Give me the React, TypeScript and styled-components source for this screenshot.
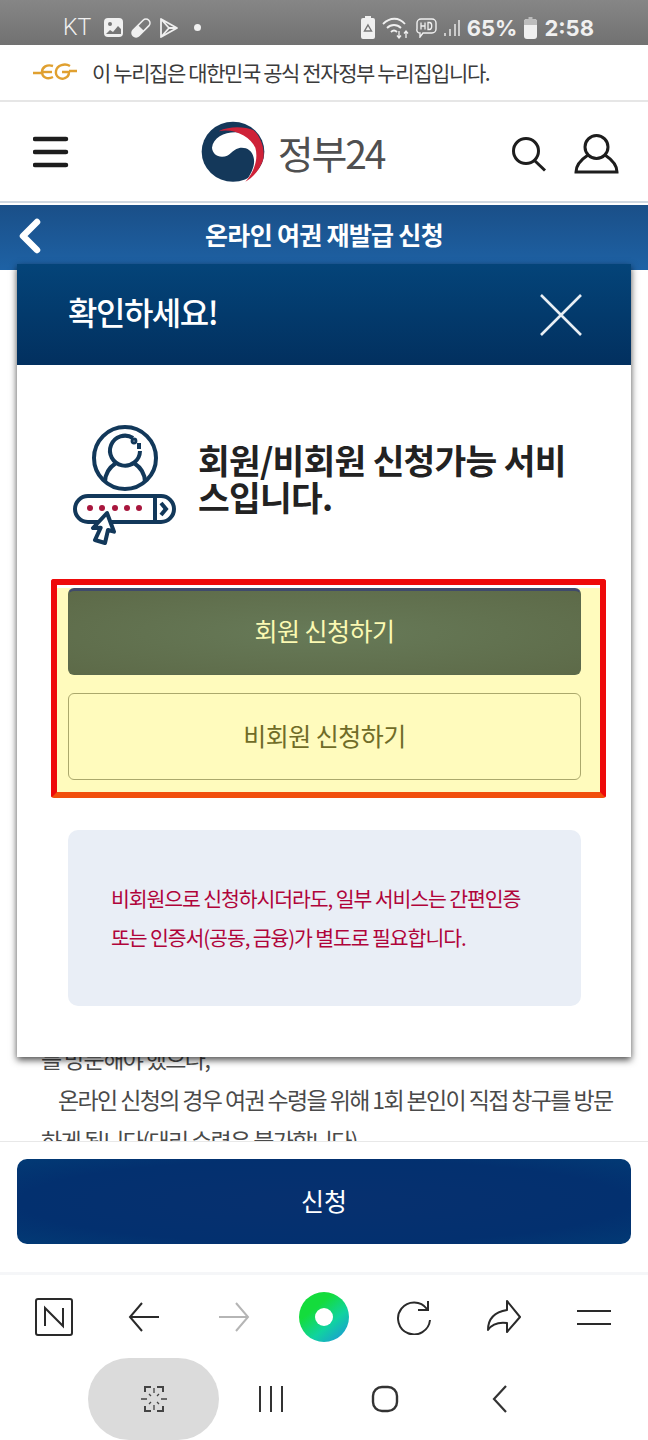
import React, { FC } from 'react'
import styled, { createGlobalStyle } from 'styled-components'

const GlobalStyle = createGlobalStyle`
  html, body {
    margin: 0;
    padding: 0;
    background: #fff;
  }
  * {
    box-sizing: border-box;
  }
  body {
    font-family: "Noto Sans CJK KR", "Noto Sans", sans-serif;
  }
`

const Page = styled.div`
  position: relative;
  width: 648px;
  height: 1440px;
  overflow: hidden;
  display: flex;
  flex-direction: column;
  background: #fff;
`

const StatusBar = styled.div`
  flex: 0 0 45px;
  display: flex;
  align-items: center;
  justify-content: space-between;
  padding: 10px 54px 0 63px;
  background: linear-gradient(#868686, #717171);
  color: #f0f0f0;
`

const StatusGroup = styled.div`
  display: flex;
  align-items: center;
  gap: 7px;
`

const Carrier = styled.span`
  font: 300 23px Roboto, sans-serif;
  margin-right: 6px;
`

const StatusStrong = styled.span`
  font: 700 22px Inter, Roboto, sans-serif;
`

const Banner = styled.div`
  flex: 0 0 57px;
  display: flex;
  align-items: center;
  gap: 15px;
  padding: 0 0 1px 33px;
  border-bottom: 2px solid #e6e6e6;
`

const BannerText = styled.span`
  font-size: 21px;
  letter-spacing: -1.4px;
  color: #3b3b3b;
`

const Header = styled.header`
  flex: 0 0 101px;
  display: flex;
  align-items: center;
  justify-content: space-between;
  padding: 0 29px 0 33px;
  border-bottom: 2px solid #cfd8e2;
`

const Logo = styled.div`
  display: flex;
  align-items: center;
  gap: 12px;
  margin-left: 5px;
`

const LogoText = styled.span`
  font: 400 39px "Noto Sans CJK KR", sans-serif;
  letter-spacing: -2.2px;
  color: #4f4f50;
`

const HeaderActions = styled.div`
  display: flex;
  align-items: center;
  gap: 27px;
  margin-top: 5px;
`

const TitleBar = styled.div`
  flex: 0 0 65px;
  margin-top: 2px;
  display: flex;
  align-items: center;
  justify-content: center;
  padding-bottom: 8px;
  position: relative;
  background: linear-gradient(#1a4f88, #1e62a5);
`

const TitleText = styled.h1`
  margin: 0;
  font-size: 25px;
  font-weight: 700;
  letter-spacing: -0.7px;
  color: #fff;
`

const BackButton = styled.span`
  position: absolute;
  left: 18px;
  top: 13px;
  display: flex;
`

const Content = styled.main`
  flex: 1;
  min-height: 0;
  overflow: hidden;
  display: flex;
  flex-direction: column;
  justify-content: flex-end;
  padding: 0 35px 0 41px;
  color: #4a4a4a;
  font-size: 23px;
  letter-spacing: -1.62px;
  line-height: 41px;
`

const ContentLine = styled.p<{ $indent?: boolean }>`
  margin: 0;
  white-space: nowrap;
  padding-left: ${(props) => (props.$indent ? '17px' : '0')};

  &:last-child {
    margin-bottom: -20px;
  }
`

const Footer = styled.div`
  flex: 0 0 134px;
  padding: 17px 17px 0;
  border-top: 1px solid #e8e8e8;
  border-bottom: 3px solid #f5f6f8;
`

const SubmitButton = styled.button`
  display: block;
  width: 100%;
  height: 85px;
  padding: 0 0 4px;
  border: 0;
  border-radius: 10px;
  background: radial-gradient(ellipse at center, #07306f 0%, #03306f 70%, #023a75 100%);
  color: #fff;
  font: 400 25px "Noto Sans CJK KR", sans-serif;
`

const BrowserBar = styled.nav`
  flex: 0 0 83px;
  display: grid;
  grid-template-columns: repeat(7, 90px);
  padding: 0 9px;
  place-items: center;
`

const NavBar = styled.div`
  flex: 0 0 82px;
  display: grid;
  grid-template-columns: 131px 104px 123px 108px;
  padding-left: 88px;
  place-items: center;
`

const CapturePill = styled.div`
  width: 131px;
  height: 82px;
  border-radius: 41px;
  background: #dbdbdb;
  display: flex;
  align-items: center;
  justify-content: center;
`

const Modal = styled.section`
  position: absolute;
  left: 17px;
  top: 264px;
  width: 614px;
  height: 793px;
  background: #fff;
  box-shadow: 0 3px 7px rgba(0, 0, 0, 0.7);
`

const ModalHead = styled.div`
  height: 101px;
  display: flex;
  align-items: center;
  justify-content: space-between;
  padding: 0 49px 0 51px;
  background: linear-gradient(#044479, #02305f);
`

const ModalTitle = styled.h2`
  margin: 0 0 8px;
  font-size: 32px;
  font-weight: 500;
  letter-spacing: -1.5px;
  color: #fff;
`

const Intro = styled.div`
  height: 214px;
  display: flex;
  align-items: center;
  gap: 21px;
  padding: 26px 53px 0 56px;

  svg {
    flex: none;
  }
`

const IntroText = styled.p`
  margin: -14px 0 0;
  font-size: 34.5px;
  font-weight: 700;
  line-height: 37px;
  letter-spacing: -0.75px;
  color: #222;
  word-break: break-all;
`

const Highlight = styled.div`
  margin: 0 25px 0 34px;
  height: 219px;
  padding: 3px 19px 0 11px;
  border: 6px solid #ee0a0a;
  border-bottom-color: #f14f0c;
  border-radius: 3px;
  background: linear-gradient(#fff 3px, #fffbbd 3px);
  display: flex;
  flex-direction: column;
  gap: 18px;
`

const ChoiceButton = styled.button<{ $primary?: boolean }>`
  flex: 0 0 87px;
  padding: 0 0 ${(props) => (props.$primary ? '6px' : '4px')};
  border-radius: 6px;
  border: 1px solid ${(props) => (props.$primary ? '#5c6a4c' : '#aba86c')};
  border-top: ${(props) => (props.$primary ? '3px solid #3f4a6b' : '1px solid #aba86c')};
  background: ${(props) => (props.$primary ? 'radial-gradient(ellipse at center, #677a58, #5d6a48)' : '#fffbbd')};
  color: ${(props) => (props.$primary ? '#fbf9b2' : '#706c28')};
  font: 400 25px "Noto Sans CJK KR", sans-serif;
  letter-spacing: -0.5px;
`

const Notice = styled.div`
  margin: 32px 50px 0 51px;
  height: 176px;
  padding: 0 40px 0 43px;
  border-radius: 10px;
  background: #e9eef6;
  display: flex;
  flex-direction: column;
  justify-content: center;
  color: #b0043a;
  font-size: 20.5px;
  line-height: 39px;
  letter-spacing: -1.1px;
`

const Burger: FC = () => (
  <svg width="36" height="34" viewBox="0 0 36 34">
    <path d="M2 4h31M2 17h31M2 30h31" stroke="#1d1d1d" strokeWidth="4.5" strokeLinecap="round" />
  </svg>
)

const Taegeuk: FC = () => (
  <svg width="65" height="62" viewBox="32 35 195 185">
    <ellipse cx="128" cy="127" rx="94" ry="90" fill="#14385a" />
    <path d="M65 115C68 85 100 68 135 68c40 0 70 32 70 77 0 30-15 55-40 72 20-27 30-52 25-72-5-25-25-33-45-29-20 4-25 26-50 26-17 0-29-12-30-27Z" fill="#fff" />
    <path d="M85 65c35-17 80-13 105-3 25 23 38 68 25 98-10 25-30 45-50 57 25-27 40-67 30-102-15-35-65-60-110-50Z" fill="#cf2238" />
  </svg>
)

const SearchIcon: FC = () => (
  <svg width="36" height="36" viewBox="0 0 36 36">
    <circle cx="15" cy="15" r="12.5" fill="none" stroke="#1d1d1d" strokeWidth="3" />
    <path d="M23 24l11 10.500" stroke="#1d1d1d" strokeWidth="3" />
  </svg>
)

const UserIcon: FC = () => (
  <svg width="45" height="40" viewBox="0 0 45 40">
    <ellipse cx="22.5" cy="13" rx="11.5" ry="11.5" fill="none" stroke="#1d1d1d" strokeWidth="3" />
    <path d="M14 21C8 25 2 31 2 38h41c0-7-6-13-12-17" fill="none" stroke="#1d1d1d" strokeWidth="3" />
  </svg>
)

const EgLogo: FC = () => (
  <svg width="44" height="20" viewBox="0 0 44 20">
    <g fill="none" stroke="#e0a030" strokeWidth="2.4">
      <path d="M0 11h8M36 9h8" />
      <path d="M20 4c-6-2-11 1-11 6s5 8 11 5" />
      <path d="M9 10h10" />
      <path d="M37 4c-5-3-13-1-14 5s5 9 9 7c3-1 4-3 4-6h-7" />
    </g>
  </svg>
)

const BackChevron: FC = () => (
  <svg width="24" height="36" viewBox="0 0 24 36">
    <path d="M19 4L5 18l14 14" fill="none" stroke="#fff" strokeWidth="6.5" strokeLinecap="round" strokeLinejoin="round" />
  </svg>
)

const CloseIcon: FC = () => (
  <svg width="42" height="42" viewBox="0 0 42 42">
    <path d="M1 1l40 40M41 1L1 41" stroke="#e8eef4" strokeWidth="2.6" />
  </svg>
)

const MemberIcon: FC = () => (
  <svg width="104" height="120" viewBox="0 0 104 120" fill="none" stroke="#12385a" strokeWidth="4">
    <circle cx="52" cy="33" r="31" />
    <path d="M60 13a15 15 0 1 0 7 13" />
    <circle cx="61" cy="16" r="1.4" />
    <path d="M66 18v6" />
    <path d="M43 38c-6 4-11 10-11 19M61 38c6 4 11 10 11 19" />
    <rect x="2" y="71" width="99" height="26" rx="13" />
    <path d="M82 71v26M88 78l5 6-5 6" />
    <g fill="#a8163d" stroke="none">
      <circle cx="17" cy="83" r="3" />
      <circle cx="29" cy="83" r="3" />
      <circle cx="42" cy="83" r="3" />
      <circle cx="54" cy="83" r="3" />
      <circle cx="66" cy="83" r="3" />
    </g>
    <path d="M34 88L20 103l7.700-.3L22 115l10 3 3-13 6 1.700Z" fill="#fff" strokeLinejoin="round" />
  </svg>
)

const PaperIcon: FC = () => (
  <svg width="38" height="38" viewBox="0 0 38 38">
    <rect x="1" y="1" width="36" height="36" rx="2" fill="none" stroke="#2a2a2a" strokeWidth="2" />
    <path d="M10 28V10l18 18V10" fill="none" stroke="#2a2a2a" strokeWidth="2" />
  </svg>
)

const ArrowIcon: FC<{ flip?: boolean; color: string }> = ({ flip, color }) => (
  <svg width="32" height="32" viewBox="0 0 32 32" style={flip ? { transform: 'scaleX(-1)' } : undefined}>
    <path d="M14 2L2 16l12 14M2 16h29" fill="none" stroke={color} strokeWidth="2" />
  </svg>
)

const GreenDot: FC = () => (
  <svg width="52" height="52" viewBox="0 0 52 52">
    <defs>
      <linearGradient id="dot" x1="0.15" y1="0.1" x2="0.85" y2="0.95">
        <stop offset="0.25" stopColor="#14dc3c" />
        <stop offset="0.65" stopColor="#10d3a0" />
        <stop offset="1" stopColor="#1b9fd0" />
      </linearGradient>
    </defs>
    <circle cx="26" cy="26" r="25" fill="url(#dot)" />
    <circle cx="26" cy="26" r="9" fill="#fff" />
  </svg>
)

const ReloadIcon: FC = () => (
  <svg width="36" height="36" viewBox="0 0 36 36" fill="none" stroke="#2a2a2a" strokeWidth="2">
    <path d="M31 10A16 16 0 1 0 34 21" />
    <path d="M32 2v9H22" />
  </svg>
)

const ShareIcon: FC = () => (
  <svg width="36" height="34" viewBox="0 0 36 34">
    <path d="M21 1l13 16-13 15v-9c-8-1-15 1-19 7 0-11 7-18 19-20Z" fill="none" stroke="#2a2a2a" strokeWidth="2" strokeLinejoin="round" />
  </svg>
)

const MenuIcon: FC = () => (
  <svg width="34" height="16" viewBox="0 0 34 16">
    <path d="M0 2h34M0 15h34" stroke="#2a2a2a" strokeWidth="2" />
  </svg>
)

const CaptureIcon: FC = () => (
  <svg width="32" height="28" viewBox="0 0 32 28" fill="none" stroke="#444" strokeWidth="2">
    <path d="M7 7V2h6M25 7V2h-6M7 21v5h6M25 21v5h-6" />
    <path d="M16 3v5M16 20v5M3 14h6M23 14h6M11 9l2 2M21 9l-2 2M11 19l2-2M21 19l-2-2" strokeWidth="1.3" />
  </svg>
)

const RecentsIcon: FC = () => (
  <svg width="26" height="28" viewBox="0 0 26 28">
    <path d="M2 1v26M13 1v26M24 1v26" stroke="#333" strokeWidth="2" />
  </svg>
)

const HomeIcon: FC = () => (
  <svg width="28" height="28" viewBox="0 0 28 28">
    <rect x="2" y="2" width="24" height="24" rx="9" fill="none" stroke="#333" strokeWidth="2.4" />
  </svg>
)

const NavBackIcon: FC = () => (
  <svg width="16" height="28" viewBox="0 0 16 28">
    <path d="M14 1L2 14l12 13" fill="none" stroke="#333" strokeWidth="2.2" />
  </svg>
)

const StatusPhoto: FC = () => (
  <svg width="19" height="19" viewBox="0 0 19 19">
    <rect width="19" height="19" rx="4" fill="#f0f0f0" />
    <circle cx="6" cy="6" r="2" fill="#777" />
    <path d="M2 16l4-4 3 2 5-6 3 3v5Z" fill="#777" />
  </svg>
)

const StatusPill: FC = () => (
  <svg width="22" height="22" viewBox="0 0 22 22">
    <g transform="rotate(45 11 11)">
      <rect x="7" y="0" width="8" height="22" rx="4" fill="none" stroke="#f0f0f0" strokeWidth="1.6" />
      <path d="M7 11h8v7a4 4 0 0 1-8 0Z" fill="#f0f0f0" />
    </g>
  </svg>
)

const StatusPlay: FC = () => (
  <svg width="20" height="22" viewBox="0 0 20 22">
    <path d="M2 2l16 9-16 9ZM2 2l8 9-8 9M10 11l8 0" fill="none" stroke="#f0f0f0" strokeWidth="1.8" strokeLinejoin="round" />
  </svg>
)

const StatusDot = styled.span`
  width: 7px;
  height: 7px;
  margin-left: 8px;
  border-radius: 50%;
  background: #f0f0f0;
`

const StatusRecycle: FC = () => (
  <svg width="14" height="23" viewBox="0 0 14 23">
    <path d="M4 0h6v2h2a2 2 0 0 1 2 2v17a2 2 0 0 1-2 2H2a2 2 0 0 1-2-2V4a2 2 0 0 1 2-2h2Z" fill="#f0f0f0" />
    <path d="M7 9l3.500 6h-7Z" fill="none" stroke="#777" strokeWidth="1.4" />
  </svg>
)

const StatusWifi: FC = () => (
  <svg width="27" height="22" viewBox="0 0 27 22" fill="none" stroke="#f0f0f0" strokeWidth="1.8">
    <path d="M1 7c7-7 16-7 22 0M5 11c4-4 10-4 14 0M9 15c2-2 4-2 6 0" />
    <path d="M17 14v7M15 18.500l2 2.500 2-2.500M24 21v-7M22 16.500l2-2.500 2 2.500" strokeWidth="1.3" />
  </svg>
)

const StatusHd: FC = () => (
  <svg width="21" height="20" viewBox="0 0 21 20">
    <path d="M5 1h11a4 4 0 0 1 4 4v6a4 4 0 0 1-4 4H7l-3 4v-4a3 3 0 0 1-3-4V5a4 4 0 0 1 4-4Z" fill="none" stroke="#f0f0f0" strokeWidth="1.4" />
    <path d="M5 4.500v7M9 4.500v7M5 8h4M12 4.500v7h1.500c3 0 3-7 0-7Z" fill="none" stroke="#f0f0f0" strokeWidth="1.3" />
  </svg>
)

const StatusSignal: FC = () => (
  <svg width="16" height="18" viewBox="0 0 16 18">
    <path d="M1 17v-3M6 17v-7M11 17V5M15 17V1" stroke="#f0f0f0" strokeWidth="1.4" />
  </svg>
)

const StatusBattery: FC = () => (
  <svg width="13" height="22" viewBox="0 0 13 22">
    <path d="M4.500 0h4v2h-4Z" fill="#bdbdbd" />
    <rect y="2" width="13" height="20" rx="3" fill="#f0f0f0" />
    <path d="M0 8V5a3 3 0 0 1 3-3h7a3 3 0 0 1 3 3v3Z" fill="#bdbdbd" />
  </svg>
)

const App: FC = () => (
  <Page>
    <GlobalStyle />
    <StatusBar>
      <StatusGroup>
        <Carrier>KT</Carrier>
        <StatusPhoto />
        <StatusPill />
        <StatusPlay />
        <StatusDot />
      </StatusGroup>
      <StatusGroup>
        <StatusRecycle />
        <StatusWifi />
        <StatusHd />
        <StatusSignal />
        <StatusStrong>65%</StatusStrong>
        <StatusBattery />
        <StatusStrong>2:58</StatusStrong>
      </StatusGroup>
    </StatusBar>
    <Banner>
      <EgLogo />
      <BannerText>이 누리집은 대한민국 공식 전자정부 누리집입니다.</BannerText>
    </Banner>
    <Header>
      <Burger />
      <Logo>
        <Taegeuk />
        <LogoText>정부24</LogoText>
      </Logo>
      <HeaderActions>
        <SearchIcon />
        <UserIcon />
      </HeaderActions>
    </Header>
    <TitleBar>
      <BackButton>
        <BackChevron />
      </BackButton>
      <TitleText>온라인 여권 재발급 신청</TitleText>
    </TitleBar>
    <Content>
      <ContentLine>를 방문해야 했으나,</ContentLine>
      <ContentLine $indent>온라인 신청의 경우 여권 수령을 위해 1회 본인이 직접 창구를 방문</ContentLine>
      <ContentLine>하게 됩니다(대리 수령은 불가합니다).</ContentLine>
    </Content>
    <Footer>
      <SubmitButton>신청</SubmitButton>
    </Footer>
    <BrowserBar>
      <PaperIcon />
      <ArrowIcon color="#2a2a2a" />
      <ArrowIcon flip color="#b5b5b5" />
      <GreenDot />
      <ReloadIcon />
      <ShareIcon />
      <MenuIcon />
    </BrowserBar>
    <NavBar>
      <CapturePill>
        <CaptureIcon />
      </CapturePill>
      <RecentsIcon />
      <HomeIcon />
      <NavBackIcon />
    </NavBar>
    <Modal>
      <ModalHead>
        <ModalTitle>확인하세요!</ModalTitle>
        <CloseIcon />
      </ModalHead>
      <Intro>
        <MemberIcon />
        <IntroText>회원/비회원 신청가능 서비스입니다.</IntroText>
      </Intro>
      <Highlight>
        <ChoiceButton $primary>회원 신청하기</ChoiceButton>
        <ChoiceButton>비회원 신청하기</ChoiceButton>
      </Highlight>
      <Notice>
        <span>비회원으로 신청하시더라도, 일부 서비스는 간편인증</span>
        <span>또는 인증서(공동, 금융)가 별도로 필요합니다.</span>
      </Notice>
    </Modal>
  </Page>
)

export default App
